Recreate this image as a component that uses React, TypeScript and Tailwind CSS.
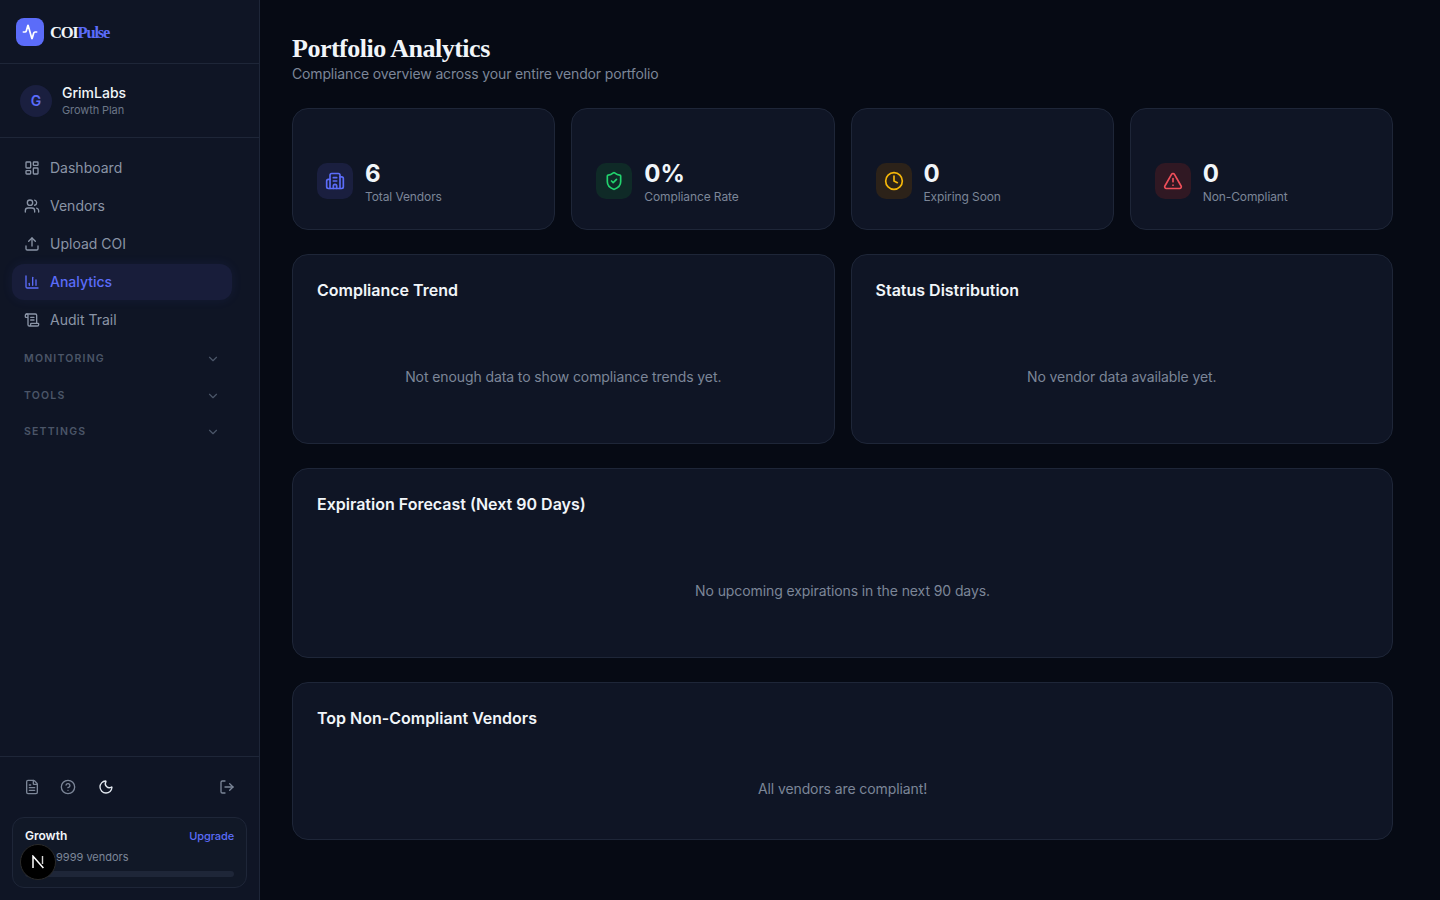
import { Activity, AlertTriangle, BarChart3, Building2, ChevronDown, CircleHelp, Clock, FileText, LayoutDashboard, LogOut, Moon, ScrollText, ShieldCheck, Upload, Users } from 'lucide-react';

const NAV_ITEMS = [
  { label: 'Dashboard', icon: LayoutDashboard },
  { label: 'Vendors', icon: Users },
  { label: 'Upload COI', icon: Upload },
  { label: 'Analytics', icon: BarChart3, active: true },
  { label: 'Audit Trail', icon: ScrollText },
];

const STATS = [
  { value: '6', label: 'Total Vendors', icon: Building2, box: 'bg-[#1a1f3f]', color: 'text-[#5b6cf9]' },
  { value: '0%', label: 'Compliance Rate', icon: ShieldCheck, box: 'bg-[#0f2a27]', color: 'text-[#22d36e]' },
  { value: '0', label: 'Expiring Soon', icon: Clock, box: 'bg-[#2c2219]', color: 'text-[#f5b70a]' },
  { value: '0', label: 'Non-Compliant', icon: AlertTriangle, box: 'bg-[#301823]', color: 'text-[#ef4f5a]' },
];

function Panel({ title, empty, height }: { title: string; empty: string; height: string }) {
  return (
    <div className={`${height} rounded-2xl border border-[#1e2638] bg-[#0f1525] px-6 pt-[23px] pb-6 flex flex-col`}>
      <h3 className="text-[16px] leading-[24px] font-semibold text-[#f1f5f9]">{title}</h3>
      <div className="flex-1 pt-[31px] flex items-center justify-center">
        <p className="text-[14px] tracking-[-0.1px] text-[#7c8698]">{empty}</p>
      </div>
    </div>
  );
}

export default function App() {
  return (
    <div className="h-[900px] flex overflow-hidden bg-[#060a14] font-['Inter',sans-serif]">
      <aside className="w-[260px] shrink-0 flex flex-col bg-[#0f1525] border-r border-[#1e2638]">
        <div className="h-[64px] shrink-0 flex items-center gap-[6px] pl-4 border-b border-[#1e2638]">
          <div className="w-7 h-7 rounded-lg bg-[#5b6cf9] flex items-center justify-center">
            <Activity size={16} strokeWidth={2.5} className="text-white" />
          </div>
          <span className="pt-[3px] font-['Liberation_Serif',serif] text-[16.5px] font-bold tracking-[-1.2px]">
            <span className="text-[#f1f5f9]">COI</span>
            <span className="text-[#5b6cf9]">Pulse</span>
          </span>
        </div>

        <div className="h-[74px] shrink-0 flex items-center gap-[10px] pl-5 border-b border-[#1e2638]">
          <div className="w-8 h-8 rounded-full bg-[#1a1f3f] flex items-center justify-center text-[14px] font-semibold text-[#5b6cf9]">G</div>
          <div>
            <p className="text-[14px] leading-[18px] font-medium text-[#f1f5f9]">GrimLabs</p>
            <p className="text-[11px] leading-[16px] tracking-[-0.1px] text-[#6b7587]">Growth Plan</p>
          </div>
        </div>

        <nav className="flex-1 pt-3 pl-3 pr-[27px]">
          <div className="flex flex-col gap-[2px]">
            {NAV_ITEMS.map(item => {
              const Icon = item.icon;
              return (
                <div
                  key={item.label}
                  className={`h-9 flex items-center gap-[10px] px-3 rounded-xl text-[14px] ${item.active ? 'bg-[#181d3a] shadow-[0_0_12px_rgba(91,108,249,0.08)] text-[#5b6cf9] font-medium' : 'text-[#8a94a6]'}`}
                >
                  <Icon size={16} />
                  <span className="pb-[2px]">{item.label}</span>
                </div>
              );
            })}
          </div>
          <div className="mt-[3px]">
            {['MONITORING', 'TOOLS', 'SETTINGS'].map(section => (
              <div key={section} className="h-[36.5px] flex items-center justify-between pl-3 pr-3 text-[#4b5568]">
                <span className="text-[10.5px] font-semibold tracking-[1.2px]">{section}</span>
                <ChevronDown size={14} />
              </div>
            ))}
          </div>
        </nav>

        <div className="shrink-0 border-t border-[#1e2638] h-[144px] flex flex-col">
          <div className="h-[60px] flex items-center pl-[24px] pr-[24px] text-[#7c8698]">
            <FileText size={16} />
            <CircleHelp size={16} className="ml-5" />
            <Moon size={16} className="ml-[22px] text-[#e2e8f0]" />
            <LogOut size={16} className="ml-auto" />
          </div>
          <div className="relative mx-3 h-[71px] rounded-xl border border-[#1e2638] bg-[#111827] px-3 pt-[10px]">
            <div className="flex items-center justify-between">
              <span className="text-[12px] leading-4 font-semibold text-[#f1f5f9]">Growth</span>
              <span className="text-[11px] leading-4 tracking-[-0.1px] font-medium text-[#5b6cf9]">Upgrade</span>
            </div>
            <p className="mt-[5px] pl-[31px] text-[11px] leading-4 text-[#7c8698]">9999 vendors</p>
            <div className="mt-[6px] h-[6px] rounded-full bg-[#1e2638]" />
            <div className="absolute left-[7px] top-[26px] w-9 h-9 rounded-full bg-black border border-[#2a2a2a] flex items-center justify-center">
              <svg width="14" height="14" viewBox="0 0 14 14" fill="none">
                <path d="M2 13V1.2L12.4 13" stroke="#fff" strokeWidth="1.5" />
                <path d="M11.5 1v8" stroke="#d4d4d4" strokeWidth="1.4" />
              </svg>
            </div>
          </div>
        </div>
      </aside>

      <main className="flex-1 pl-8 pr-[47px] pt-[34px]">
        <h1 className="font-['Liberation_Serif',serif] text-[26px] leading-[30px] font-bold tracking-[-0.5px] text-[#f1f5f9]">Portfolio Analytics</h1>
        <p className="text-[14px] leading-[20px] tracking-[-0.15px] text-[#7c8698]">Compliance overview across your entire vendor portfolio</p>

        <div className="mt-[24px] grid grid-cols-4 gap-4">
          {STATS.map(stat => {
            const Icon = stat.icon;
            return (
              <div key={stat.label} className="h-[122px] rounded-2xl border border-[#1e2638] bg-[#0f1525] px-6 pb-[23px] flex items-end">
                <div className="flex items-start gap-3">
                  <div className={`mt-[3px] w-9 h-9 rounded-[10px] flex items-center justify-center ${stat.box} ${stat.color}`}>
                    <Icon size={20} />
                  </div>
                  <div>
                    <p className="text-[24px] leading-[28px] font-bold text-[#f1f5f9]">{stat.value}</p>
                    <p className="text-[12px] leading-[18px] tracking-[-0.1px] text-[#7c8698]">{stat.label}</p>
                  </div>
                </div>
              </div>
            );
          })}
        </div>

        <div className="mt-6 grid grid-cols-2 gap-4">
          <Panel title="Compliance Trend" empty="Not enough data to show compliance trends yet." height="h-[190px]" />
          <Panel title="Status Distribution" empty="No vendor data available yet." height="h-[190px]" />
        </div>
        <div className="mt-6">
          <Panel title="Expiration Forecast (Next 90 Days)" empty="No upcoming expirations in the next 90 days." height="h-[190px]" />
        </div>
        <div className="mt-6">
          <Panel title="Top Non-Compliant Vendors" empty="All vendors are compliant!" height="h-[158px]" />
        </div>
      </main>
    </div>
  );
}
